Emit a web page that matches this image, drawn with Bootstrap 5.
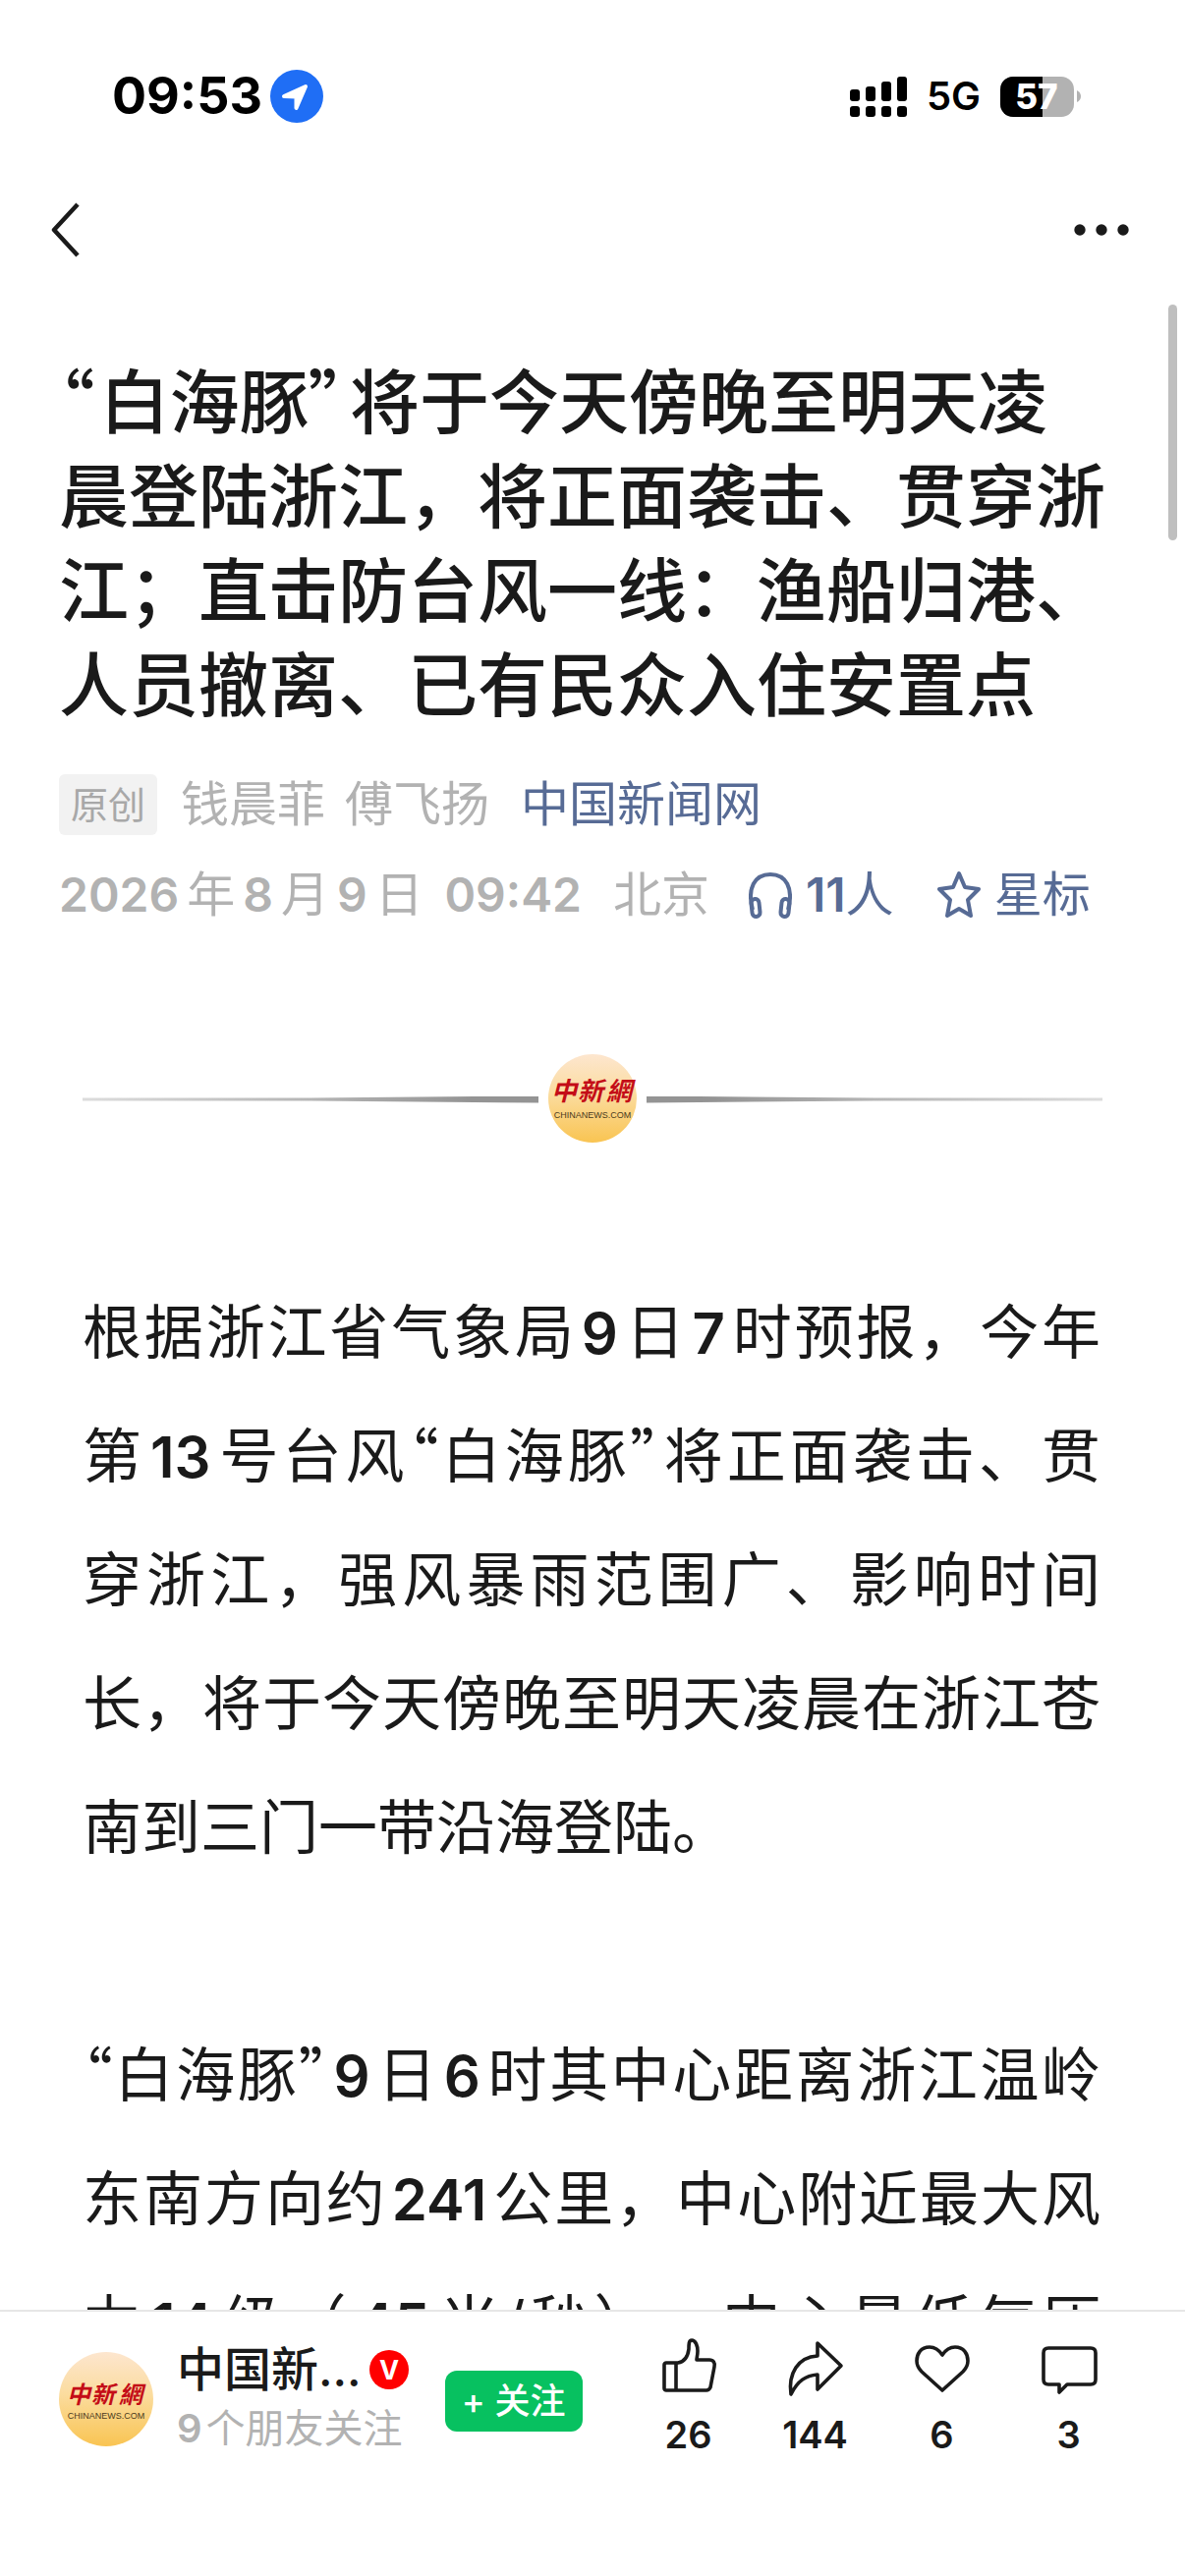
<!DOCTYPE html>
<html lang="zh-CN">
<head>
  <meta charset="UTF-8">
  <meta name="viewport" content="width=device-width, initial-scale=1">
  <title>中国新闻网</title>
  <link href="https://cdn.jsdelivr.net/npm/bootstrap@5.3.3/dist/css/bootstrap.min.css" rel="stylesheet">
  <style>
    body { font-family: Inter, "Noto Sans CJK SC", sans-serif; color: #1a1a1a; background: #fff; }
    b { font-weight: 600; }
    svg { display: block; flex: none; }
    .status-bar { padding: 68px 106px 46px 114px; height: 174px; color: #000; }
    .clock { font-size: 52px; font-weight: 700; line-height: 60px; }
    .net { font-size: 40px; font-weight: 600; line-height: 60px; }
    .nav-top { height: 120px; padding: 0 54px 0 48px; }
    .article { padding: 67px 60px 0; }
    .title { font-size: 71px; font-weight: 500; line-height: 96px; margin: 0 -6px 28px 0; }
    .quo { font-family: "Noto Sans CJK SC", sans-serif; font-feature-settings: "palt"; line-height: 1; }
    .title .quo { padding-right: 6px; }
    .meta-row { font-size: 49px; line-height: 92px; color: #b2b2b2; white-space: nowrap; }
    .meta-row a { color: #576b95; }
    .meta-row b { font-size: 48px; line-height: 1; }
    .date b { margin-left: 8px; margin-right: 8px; }
    .date b:first-child { margin-left: 0; }
    .origin { font-size: 38px; line-height: 62px; padding: 0 12px; background: #f2f2f2; color: #a8a8a8; border-radius: 6px; }
    .gap-name { margin-left: 20px; }
    .gap-link { margin-left: 32px; }
    .gap-audio { margin-left: 40px; gap: 14px; }
    .gap-star { margin-left: 44px; gap: 14px; }
    .rule { margin: 112px 24px 124px; gap: 9px; }
    .taper { height: 7px; background: linear-gradient(to right, #dcdcdc, #b5b5b5 50%, #949494 85%); clip-path: polygon(0 30%, 50% 30%, 100% 0, 100% 100%, 50% 70%, 0 70%); }
    .taper-end { background: linear-gradient(to left, #dcdcdc, #b5b5b5 50%, #949494 85%); clip-path: polygon(0 0, 50% 30%, 100% 30%, 100% 70%, 50% 70%, 0 100%); }
    .para { font-size: 60px; line-height: 126px; margin: 0 26px 126px 24px; white-space: nowrap; text-spacing-trim: space-all; }
    .para b { font-size: 58px; line-height: 1; margin: 0 5px; }
    .para .line { display: block; text-align: justify; text-align-last: justify; }
    .para .tail { text-align-last: left; }
    .scroll-thumb { top: 310px; right: 8px; width: 9px; height: 240px; border-radius: 5px; background: #bfbfbf; }
    .bottom-bar { border-top: 2px solid #e6e6e6; padding: 25px 54px 112px 60px; }
    .source { font-size: 48px; line-height: 64px; font-weight: 500; }
    .friends { font-size: 40px; line-height: 56px; color: #b2b2b2; }
    .friends b { margin-right: 4px; }
    .follow { font-size: 36px; font-weight: 500; line-height: 62px; width: 140px; margin-left: 37px; background: #07c160; color: #fff; border-radius: 12px; }
    .follow:hover { background: #06ad56; color: #fff; }
    .act { width: 129px; gap: 12px; font-size: 38px; font-weight: 600; line-height: 48px; color: #1a1a1a; }
    .brand { font-family: "Noto Sans CJK TC", sans-serif; font-weight: 700; font-style: italic; fill: #c40d17; text-anchor: middle; }
    .brand-url { font-family: "Liberation Sans", sans-serif; fill: #4a3a20; text-anchor: middle; }
  </style>
</head>
<body>
<!-- gold fill shared by both logos -->
<svg width="0" height="0" class="position-absolute" aria-hidden="true">
  <defs>
    <linearGradient id="gold" x1="0" y1="0" x2="0" y2="1">
      <stop offset="0" stop-color="#fde6cf"/>
      <stop offset=".45" stop-color="#fbdc9e"/>
      <stop offset="1" stop-color="#f9c452"/>
    </linearGradient>
  </defs>
</svg>

<div class="vh-100 d-flex flex-column overflow-hidden position-relative">
  <div class="status-bar flex-shrink-0 d-flex align-items-center justify-content-between">
    <div class="d-flex align-items-center gap-2">
      <span class="clock">09:53</span>
      <svg width="54" height="54" viewBox="0 0 54 54">
        <circle cx="27" cy="27" r="27" fill="#1f6ef5"/>
        <path d="M14 27L36 17 26.500 39V27.500z" fill="#fff" stroke="#fff" stroke-width="4" stroke-linejoin="round"/>
      </svg>
    </div>
    <div class="d-flex align-items-center">
      <svg width="58" height="41" viewBox="0 0 58 41">
        <rect x="0" y="13" width="10" height="12" rx="3"/><rect x="16" y="10" width="10" height="15" rx="3"/>
        <rect x="32" y="5" width="10" height="20" rx="3"/><rect x="48" y="0" width="10" height="25" rx="3"/>
        <rect x="0" y="30" width="10" height="11" rx="3"/><rect x="16" y="30" width="10" height="11" rx="3"/>
        <rect x="32" y="30" width="10" height="11" rx="3"/><rect x="48" y="30" width="10" height="11" rx="3"/>
      </svg>
      <span class="net mx-3 px-1">5G</span>
      <svg width="82" height="41" viewBox="0 0 82 41">
        <clipPath id="cell"><rect width="75" height="41" rx="13"/></clipPath>
        <g clip-path="url(#cell)"><rect width="75" height="41" fill="#b2b2b2"/><rect width="43" height="41"/></g>
        <path d="M78 14q4 2 4 6t-4 6z" fill="#b2b2b2"/>
        <text x="37" y="33" text-anchor="middle" font-family="Inter, sans-serif" font-size="35" font-weight="800" fill="#fff">57</text>
      </svg>
    </div>
  </div>

  <nav class="nav-top flex-shrink-0 d-flex align-items-center justify-content-between">
    <button class="btn p-0 border-0" aria-label="返回">
      <svg width="36" height="60" viewBox="0 0 36 60" fill="none" stroke="#1a1a1a" stroke-width="4.500" stroke-linejoin="round"><path d="M31 4L7 30l24 26"/></svg>
    </button>
    <button class="btn p-0 border-0" aria-label="更多">
      <svg width="60" height="12" viewBox="0 0 60 12" fill="#1a1a1a"><circle cx="7" cy="6" r="5.700"/><circle cx="29" cy="6" r="5.700"/><circle cx="51" cy="6" r="5.700"/></svg>
    </button>
  </nav>

  <main class="article flex-grow-1 overflow-hidden">
    <h1 class="title"><span class="quo">“</span>白海豚<span class="quo">”</span>将于今天傍晚至明天凌<br>晨登陆浙江，将正面袭击、贯穿浙江；直击防台风一线：渔船归港、人员撤离、已有民众入住安置点</h1>
    <div class="meta-row d-flex align-items-center">
      <span class="origin">原创</span>
      <span class="ms-4">钱晨菲</span>
      <span class="gap-name">傅飞扬</span>
      <a href="#" class="text-decoration-none gap-link">中国新闻网</a>
    </div>
    <div class="meta-row d-flex align-items-center">
      <span class="date"><b>2026</b>年<b>8</b>月<b>9</b>日 <b>09:42</b></span>
      <span class="ms-4">北京</span>
      <a href="#" class="text-decoration-none d-flex align-items-center gap-audio">
        <svg width="44" height="50" viewBox="0 0 44 50" fill="none" stroke="#576b95" stroke-width="4">
          <path d="M4 40C-2 18 6 4 22 4s24 14 18 36"/>
          <rect x="3" y="29" width="8" height="18" rx="4" transform="rotate(-6 7 38)"/><rect x="33" y="29" width="8" height="18" rx="4" transform="rotate(6 37 38)"/>
        </svg>
        <span><b>11</b>人</span>
      </a>
      <a href="#" class="text-decoration-none d-flex align-items-center gap-star">
        <svg width="44" height="50" viewBox="0 0 44 50" fill="none" stroke="#576b95" stroke-width="4" stroke-linejoin="round"><path d="M22 3l6 14 14 2-11 11 3 16-12-7-12 7 3-16L2 19l14-2z"/></svg>
        <span>星标</span>
      </a>
    </div>

    <div class="rule d-flex align-items-center">
      <div class="taper flex-fill"></div>
      <svg width="92" height="100" viewBox="0 0 92 100" role="img" aria-label="中新網">
        <circle cx="46" cy="49" r="45" fill="url(#gold)"/>
        <text class="brand" x="17 44 73" y="51" font-size="26">中新網</text>
        <text class="brand-url" x="46" y="69" font-size="9">CHINANEWS.COM</text>
      </svg>
      <div class="taper taper-end flex-fill"></div>
    </div>

    <p class="para">
      <span class="line">根据浙江省气象局<b>9</b>日<b>7</b>时预报，今年</span>
      <span class="line">第<b>13</b>号台风<span class="quo">“</span>白海豚<span class="quo">”</span>将正面袭击、贯</span>
      <span class="line">穿浙江，强风暴雨范围广、影响时间</span>
      <span class="line">长，将于今天傍晚至明天凌晨在浙江苍</span>
      <span class="line tail">南到三门一带沿海登陆。</span>
    </p>
    <p class="para">
      <span class="line"><span class="quo">“</span>白海豚<span class="quo">”</span><b>9</b>日<b>6</b>时其中心距离浙江温岭</span>
      <span class="line">东南方向约<b>241</b>公里，中心附近最大风</span>
      <span class="line">力<b>14</b>级（<b>45</b>米/秒），中心最低气压</span>
    </p>
  </main>

  <div class="scroll-thumb position-absolute"></div>

  <footer class="bottom-bar flex-shrink-0 bg-white d-flex align-items-start justify-content-between">
    <div class="d-flex align-items-center">
      <svg width="96" height="132" viewBox="0 0 96 132" role="img" aria-label="中新網">
        <circle cx="48" cy="64" r="48" fill="url(#gold)"/>
        <text class="brand" x="20 45 73" y="68" font-size="24">中新網</text>
        <text class="brand-url" x="48" y="84" font-size="9">CHINANEWS.COM</text>
      </svg>
      <div class="ms-4 pb-2">
        <div class="source d-flex align-items-center gap-2">中国新...
          <svg width="40" height="40" viewBox="0 0 40 40"><circle cx="20" cy="20" r="20" fill="#f00"/><text x="20" y="30" text-anchor="middle" font-family="Inter, sans-serif" font-size="27" font-weight="700" fill="#fff">V</text></svg>
        </div>
        <div class="friends"><b>9</b>个朋友关注</div>
      </div>
      <button class="follow btn p-0 border-0">+ 关注</button>
    </div>
    <div class="d-flex">
      <button class="act btn p-0 border-0 d-flex flex-column align-items-center" aria-label="赞 26">
        <svg width="64" height="64" viewBox="0 0 64 64" fill="none" stroke="#1a1a1a" stroke-width="3.600" stroke-linejoin="round"><path d="M9 27h12c6-1 10-6 11-14 0-5 0-9 3-9 4 0 6 6 6 11 0 4-1 7-1 9h13c4 0 6 3 5 7l-4 21c-1 2-2 3-4 3H9c-1 0-2-1-2-2V29c0-1 1-2 2-2zM19 27v28"/></svg>26
      </button>
      <button class="act btn p-0 border-0 d-flex flex-column align-items-center" aria-label="分享 144">
        <svg width="64" height="64" viewBox="0 0 64 64" fill="none" stroke="#1a1a1a" stroke-width="3.600" stroke-linejoin="round"><path d="M7 59C4 38 14 21 34 20V7l24 23-24 24V39C22 40 14 45 7 59z"/></svg>144
      </button>
      <button class="act btn p-0 border-0 d-flex flex-column align-items-center" aria-label="喜欢 6">
        <svg width="64" height="64" viewBox="0 0 64 64" fill="none" stroke="#1a1a1a" stroke-width="3.600" stroke-linejoin="round"><path d="M32 19c-4-6-8-8-13-8C10 11 6 18 6 25c0 5 2 8 5 11l21 19 21-19c3-3 5-6 5-11 0-7-4-14-13-14-5 0-9 2-13 8z"/></svg>6
      </button>
      <button class="act btn p-0 border-0 d-flex flex-column align-items-center" aria-label="留言 3">
        <svg width="64" height="64" viewBox="0 0 64 64" fill="none" stroke="#1a1a1a" stroke-width="3.600" stroke-linejoin="round"><path d="M11 12h43q5 0 5 5v27q0 5-5 5H30l-8 8v-8H11q-5 0-5-5V17q0-5 5-5z"/></svg>3
      </button>
    </div>
  </footer>
</div>
<script src="https://cdn.jsdelivr.net/npm/bootstrap@5.3.3/dist/js/bootstrap.bundle.min.js"></script>
</body>
</html>
